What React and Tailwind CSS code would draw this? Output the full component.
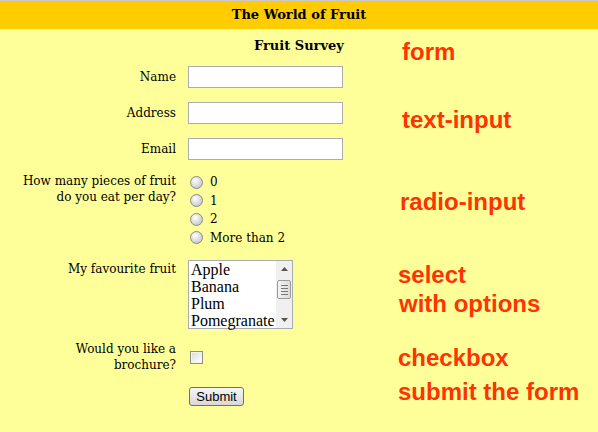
import React from "react";

const serif = "font-['DejaVu_Serif',Georgia,serif]";

const Radio = () => (
  <svg width="13" height="13" viewBox="0 0 13 13" className="shrink-0">
    <defs>
      <radialGradient id="rg" cx="40%" cy="35%" r="70%">
        <stop offset="0%" stopColor="#ffffff" />
        <stop offset="100%" stopColor="#c4c4c4" />
      </radialGradient>
    </defs>
    <circle cx="6.5" cy="6.5" r="6" fill="url(#rg)" stroke="#8c8c8c" />
  </svg>
);

const Checkbox = () => (
  <svg width="13" height="13" viewBox="0 0 13 13" className="shrink-0">
    <defs>
      <linearGradient id="cg" x1="0" y1="0" x2="1" y2="1">
        <stop offset="0%" stopColor="#dcdcdc" />
        <stop offset="100%" stopColor="#ffffff" />
      </linearGradient>
    </defs>
    <rect x="0.5" y="0.5" width="12" height="12" fill="#f4f4f4" stroke="#8f8f8f" />
    <rect x="2" y="2" width="9" height="9" fill="url(#cg)" />
  </svg>
);

const TextRow = ({ label, className = "" }) => (
  <div className={`flex items-center ${className}`}>
    <div className="w-[176px] text-right leading-[16px]">{label}</div>
    <div className="ml-3 h-[22px] w-[155px] border border-[#abadb3] bg-white" />
  </div>
);

const Listbox = () => (
  <div className="ml-3 flex h-[69px] w-[105px] border border-[#a5acb2] bg-white">
    <div className="flex-1 pl-[2px] font-['Liberation_Serif',serif] text-[16px] leading-[17px] text-black">
      <div>Apple</div>
      <div>Banana</div>
      <div>Plum</div>
      <div className="whitespace-nowrap">Pomegranate</div>
    </div>
    <div className="flex w-[16px] flex-col bg-[#f0f0f0]">
      <div className="flex h-[16px] items-center justify-center">
        <svg width="7" height="4" viewBox="0 0 7 4">
          <path d="M0 4 L3.5 0 L7 4 Z" fill="#555" />
        </svg>
      </div>
      <div className="mx-[1px] mt-[3px] flex h-[19px] flex-col items-center justify-center gap-[2px] rounded-[2px] border border-[#9a9a9a] bg-gradient-to-r from-[#f4f4f4] to-[#dcdcdc]">
        <div className="h-px w-[7px] bg-[#777]" />
        <div className="h-px w-[7px] bg-[#777]" />
        <div className="h-px w-[7px] bg-[#777]" />
        <div className="h-px w-[7px] bg-[#777]" />
      </div>
      <div className="flex-1" />
      <div className="flex h-[16px] items-center justify-center">
        <svg width="7" height="4" viewBox="0 0 7 4">
          <path d="M0 0 L3.5 4 L7 0 Z" fill="#555" />
        </svg>
      </div>
    </div>
  </div>
);

const notes = "font-['Liberation_Sans',Arial,sans-serif] text-[24px] font-bold leading-[28px] text-[#ff3300]";

export default function App() {
  return (
    <div className={`h-[432px] w-[598px] overflow-hidden bg-[#ffff99] ${serif} text-[12px] text-black`}>
      <div className="flex h-[29px] items-center justify-center border-t border-[#c8c8c8] bg-[#ffcc00] text-[13px] font-bold">
        The World of Fruit
      </div>

      <div className="flex">
        {/* form */}
        <div className="w-[398px]">
          <div className="mt-[9px] pl-[254px] text-[13px] font-bold leading-[16px]">Fruit Survey</div>

          <TextRow label="Name" className="mt-[12px]" />
          <TextRow label="Address" className="mt-[14px]" />
          <TextRow label="Email" className="mt-[14px]" />

          <div className="mt-[13px] flex">
            <div className="w-[176px] text-right leading-[16px]">
              How many pieces of fruit
              <br />
              do you eat per day?
            </div>
            <div className="ml-[14px] flex flex-col">
              {["0", "1", "2", "More than 2"].map((v) => (
                <div key={v} className="flex h-[18.5px] items-center gap-[7px]">
                  <Radio />
                  <span className="leading-[16px]">{v}</span>
                </div>
              ))}
            </div>
          </div>

          <div className="mt-[13px] flex">
            <div className="w-[176px] pt-px text-right leading-[16px]">My favourite fruit</div>
            <Listbox />
          </div>

          <div className="mt-[12px] flex items-center">
            <div className="w-[176px] text-right leading-[16px]">
              Would you like a
              <br />
              brochure?
            </div>
            <div className="ml-[14px]">
              <Checkbox />
            </div>
          </div>

          <div className="mt-[14px] pl-[189px]">
            <button className="h-[19px] w-[55px] rounded-[3px] border border-[#707070] bg-gradient-to-b from-[#f6f6f6] to-[#d8d8d8] font-['Liberation_Sans',Arial,sans-serif] text-[13px] leading-[17px] text-black">
              Submit
            </button>
          </div>
        </div>

        {/* annotations */}
        <div className={notes}>
          <div className="mt-[9px] pl-[4px]">form</div>
          <div className="mt-[40px] pl-[4px]">text-input</div>
          <div className="mt-[54px] pl-[2px]">radio-input</div>
          <div className="mt-[45px]">select</div>
          <div className="mt-px pl-px">with options</div>
          <div className="mt-[26px]">checkbox</div>
          <div className="mt-[6px]">submit the form</div>
        </div>
      </div>
    </div>
  );
}
